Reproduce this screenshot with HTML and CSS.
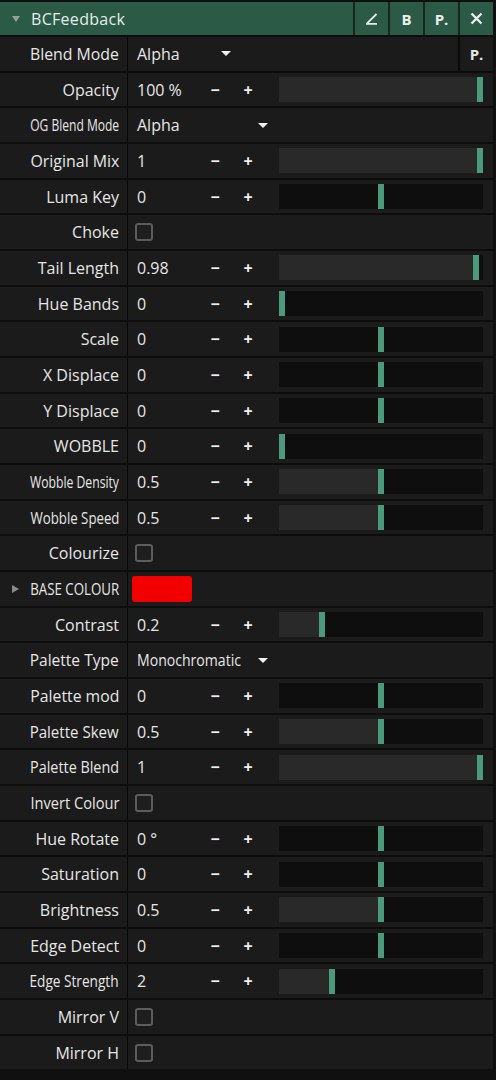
FILE: index.html
```html
<!DOCTYPE html>
<html>
<head>
<meta charset="utf-8">
<link rel="stylesheet" href="styles.css">
</head>
<body>
<div class="panel">
  <div class="header">
    <div class="htitle"><span class="caret-down"></span><span class="title">BCFeedback</span></div>
    <div class="hbtn"><svg width="13" height="12" viewBox="0 0 13 12"><path d="M11.5 1 L2 10.3 M1 10.8 H12" stroke="#e9efec" stroke-width="1.8" fill="none"/></svg></div>
    <div class="hbtn">B</div>
    <div class="hbtn">P.</div>
    <div class="hbtn"><svg width="13" height="13" viewBox="0 0 13 13"><path d="M1.5 1.5 L11.5 11.5 M11.5 1.5 L1.5 11.5" stroke="#e9efec" stroke-width="2.4" fill="none"/></svg></div>
  </div>
  <div class="rows">
    <div class="row"><div class="lbl"><span>Blend Mode</span></div><div class="ctl dd"><span class="val">Alpha</span><span class="arrow"></span><span class="pbtn">P.</span></div></div>
    <div class="row"><div class="lbl"><span>Opacity</span></div><div class="ctl num"><span class="val">100 %</span><span class="pm">−</span><span class="pm plus">+</span><div class="slider" style="--v:1;--f:1"><div class="fill"></div><div class="knob"></div></div></div></div>
    <div class="row"><div class="lbl"><span>OG Blend Mode</span></div><div class="ctl dd"><span class="val w2">Alpha</span><span class="arrow"></span></div></div>
    <div class="row"><div class="lbl"><span>Original Mix</span></div><div class="ctl num"><span class="val">1</span><span class="pm">−</span><span class="pm plus">+</span><div class="slider" style="--v:1;--f:1"><div class="fill"></div><div class="knob"></div></div></div></div>
    <div class="row"><div class="lbl"><span>Luma Key</span></div><div class="ctl num"><span class="val">0</span><span class="pm">−</span><span class="pm plus">+</span><div class="slider" style="--v:.5;--f:0"><div class="fill"></div><div class="knob"></div></div></div></div>
    <div class="row"><div class="lbl"><span>Choke</span></div><div class="ctl"><span class="chk"></span></div></div>
    <div class="row"><div class="lbl"><span>Tail Length</span></div><div class="ctl num"><span class="val">0.98</span><span class="pm">−</span><span class="pm plus">+</span><div class="slider" style="--v:.98;--f:.98"><div class="fill"></div><div class="knob"></div></div></div></div>
    <div class="row"><div class="lbl"><span>Hue Bands</span></div><div class="ctl num"><span class="val">0</span><span class="pm">−</span><span class="pm plus">+</span><div class="slider" style="--v:0;--f:0"><div class="fill"></div><div class="knob"></div></div></div></div>
    <div class="row"><div class="lbl"><span>Scale</span></div><div class="ctl num"><span class="val">0</span><span class="pm">−</span><span class="pm plus">+</span><div class="slider" style="--v:.5;--f:0"><div class="fill"></div><div class="knob"></div></div></div></div>
    <div class="row"><div class="lbl"><span>X Displace</span></div><div class="ctl num"><span class="val">0</span><span class="pm">−</span><span class="pm plus">+</span><div class="slider" style="--v:.5;--f:0"><div class="fill"></div><div class="knob"></div></div></div></div>
    <div class="row"><div class="lbl"><span>Y Displace</span></div><div class="ctl num"><span class="val">0</span><span class="pm">−</span><span class="pm plus">+</span><div class="slider" style="--v:.5;--f:0"><div class="fill"></div><div class="knob"></div></div></div></div>
    <div class="row"><div class="lbl"><span>WOBBLE</span></div><div class="ctl num"><span class="val">0</span><span class="pm">−</span><span class="pm plus">+</span><div class="slider" style="--v:0;--f:0"><div class="fill"></div><div class="knob"></div></div></div></div>
    <div class="row"><div class="lbl"><span>Wobble Density</span></div><div class="ctl num"><span class="val">0.5</span><span class="pm">−</span><span class="pm plus">+</span><div class="slider" style="--v:.5;--f:.5"><div class="fill"></div><div class="knob"></div></div></div></div>
    <div class="row"><div class="lbl"><span>Wobble Speed</span></div><div class="ctl num"><span class="val">0.5</span><span class="pm">−</span><span class="pm plus">+</span><div class="slider" style="--v:.5;--f:.5"><div class="fill"></div><div class="knob"></div></div></div></div>
    <div class="row"><div class="lbl"><span>Colourize</span></div><div class="ctl"><span class="chk"></span></div></div>
    <div class="row"><div class="lbl grp"><span class="caret-right"></span><span>BASE COLOUR</span></div><div class="ctl"><span class="swatch"></span></div></div>
    <div class="row"><div class="lbl"><span>Contrast</span></div><div class="ctl num"><span class="val">0.2</span><span class="pm">−</span><span class="pm plus">+</span><div class="slider" style="--v:.2;--f:.2"><div class="fill"></div><div class="knob"></div></div></div></div>
    <div class="row"><div class="lbl"><span>Palette Type</span></div><div class="ctl dd"><span class="val w2"><span class="squeeze">Monochromatic</span></span><span class="arrow"></span></div></div>
    <div class="row"><div class="lbl"><span>Palette mod</span></div><div class="ctl num"><span class="val">0</span><span class="pm">−</span><span class="pm plus">+</span><div class="slider" style="--v:.5;--f:0"><div class="fill"></div><div class="knob"></div></div></div></div>
    <div class="row"><div class="lbl"><span>Palette Skew</span></div><div class="ctl num"><span class="val">0.5</span><span class="pm">−</span><span class="pm plus">+</span><div class="slider" style="--v:.5;--f:.5"><div class="fill"></div><div class="knob"></div></div></div></div>
    <div class="row"><div class="lbl"><span>Palette Blend</span></div><div class="ctl num"><span class="val">1</span><span class="pm">−</span><span class="pm plus">+</span><div class="slider" style="--v:1;--f:1"><div class="fill"></div><div class="knob"></div></div></div></div>
    <div class="row"><div class="lbl"><span>Invert Colour</span></div><div class="ctl"><span class="chk"></span></div></div>
    <div class="row"><div class="lbl"><span>Hue Rotate</span></div><div class="ctl num"><span class="val">0 °</span><span class="pm">−</span><span class="pm plus">+</span><div class="slider" style="--v:.5;--f:0"><div class="fill"></div><div class="knob"></div></div></div></div>
    <div class="row"><div class="lbl"><span>Saturation</span></div><div class="ctl num"><span class="val">0</span><span class="pm">−</span><span class="pm plus">+</span><div class="slider" style="--v:.5;--f:0"><div class="fill"></div><div class="knob"></div></div></div></div>
    <div class="row"><div class="lbl"><span>Brightness</span></div><div class="ctl num"><span class="val">0.5</span><span class="pm">−</span><span class="pm plus">+</span><div class="slider" style="--v:.5;--f:.5"><div class="fill"></div><div class="knob"></div></div></div></div>
    <div class="row"><div class="lbl"><span>Edge Detect</span></div><div class="ctl num"><span class="val">0</span><span class="pm">−</span><span class="pm plus">+</span><div class="slider" style="--v:.5;--f:0"><div class="fill"></div><div class="knob"></div></div></div></div>
    <div class="row"><div class="lbl"><span>Edge Strength</span></div><div class="ctl num"><span class="val">2</span><span class="pm">−</span><span class="pm plus">+</span><div class="slider" style="--v:.25;--f:.25"><div class="fill"></div><div class="knob"></div></div></div></div>
    <div class="row"><div class="lbl"><span>Mirror V</span></div><div class="ctl"><span class="chk"></span></div></div>
    <div class="row"><div class="lbl"><span>Mirror H</span></div><div class="ctl"><span class="chk"></span></div></div>
  </div>
</div>
<script src="fit.js"></script>
</body>
</html>
```

FILE: fit.js
```js
function fit(sel, max, shrinkBox) {
  document.querySelectorAll(sel).forEach(function (s) {
    var w = s.getBoundingClientRect().width;
    if (w > max) {
      if (shrinkBox) s.style.marginLeft = (max - w) + 'px';
      s.style.transform = 'scaleX(' + (max / w) + ')';
    }
  });
}
fit('.lbl span:last-child', 89, true);
fit('.squeeze', 104, false);
```

FILE: styles.css
```css
* { box-sizing: border-box; }
html, body { margin: 0; padding: 0; }
body {
  background: #101010;
  width: 496px;
  height: 1080px;
  overflow: hidden;
  font-family: "Open Sans", "Noto Sans", sans-serif;
  font-size: 16px;
  font-weight: 500;
  color: #e6e6e6;
}
.panel {
  width: 493px;
  padding-top: 2px;
}
.header {
  height: 33px;
  display: flex;
  background: #17261f;
  gap: 2px;
}
.header .htitle {
  flex: 1;
  display: flex;
  align-items: center;
  padding-left: 12px;
  gap: 11px;
  background: #2b5a47;
}
.caret-down {
  width: 0; height: 0;
  border-left: 4.5px solid transparent;
  border-right: 4.5px solid transparent;
  border-top: 6px solid #8fa39a;
}
.title {
  color: #e3eee8;
  font-size: 16px;
  letter-spacing: 0.3px;
}
.hbtn {
  width: 33px;
  display: flex;
  align-items: center;
  justify-content: center;
  color: #e9efec;
  font-weight: 700;
  font-size: 15px;
  background: #2b5a47;
}
.rows {
  display: flex;
  flex-direction: column;
  gap: 2px;
  padding-top: 2px;
  background: #0d0d0d;
}
.row {
  height: 33.68px;
  display: grid;
  grid-template-columns: 128px 1fr;
  background: #1c1b1b;
}
.lbl {
  display: flex;
  align-items: center;
  justify-content: flex-end;
  padding-right: 8px;
  border-right: 1px solid #080808;
  white-space: nowrap;
}
.lbl span { display: inline-block; flex: none; transform-origin: right center; }
.lbl.grp { justify-content: space-between; padding-left: 12px; padding-right: 8px; }
.caret-right {
  width: 0; height: 0;
  border-top: 4.5px solid transparent;
  border-bottom: 4.5px solid transparent;
  border-left: 7px solid #8a8a8a;
}
.ctl {
  display: flex;
  align-items: center;
  padding-left: 9px;
  padding-right: 10px;
  white-space: nowrap;
}
.val { flex: none; }
.num .val { width: 71px; }
.pm {
  flex: none;
  width: 14px;
  text-align: center;
  font-weight: 700;
  font-size: 16px;
  color: #f0f0f0;
}
.pm.plus { margin-left: 19px; }
.slider {
  flex: 1;
  margin-left: 24px;
  position: relative;
  height: 25px;
  background: #0e0e0e;
}
.fill {
  position: absolute;
  left: 0; top: 0; bottom: 0;
  width: calc(var(--f) * (100% - 6px));
  background: #292929;
}
.knob {
  position: absolute;
  top: 0; bottom: 0;
  width: 6px;
  left: calc(var(--v) * (100% - 6px));
  background: #4b9a7c;
}
.dd .val { width: 84px; }
.dd .val.w2 { width: 121px; }
.squeeze { display: inline-block; transform-origin: left center; }
.arrow {
  flex: none;
  width: 0; height: 0;
  border-left: 5px solid transparent;
  border-right: 5px solid transparent;
  border-top: 5px solid #f2f2f2;
}
.pbtn {
  margin-left: auto;
  margin-right: -10px;
  width: 35px;
  height: 100%;
  display: flex;
  align-items: center;
  justify-content: center;
  border-left: 2px solid #0a0a0a;
  font-weight: 700;
  font-size: 15px;
}
.chk {
  width: 18px;
  height: 18px;
  margin-left: -2px;
  border: 2px solid #5c5c5c;
  border-radius: 3px;
  background: #1f1e1e;
}
.swatch {
  width: 60px;
  height: 26px;
  margin-left: -5px;
  border-radius: 3px;
  background: #f20000;
}
```
